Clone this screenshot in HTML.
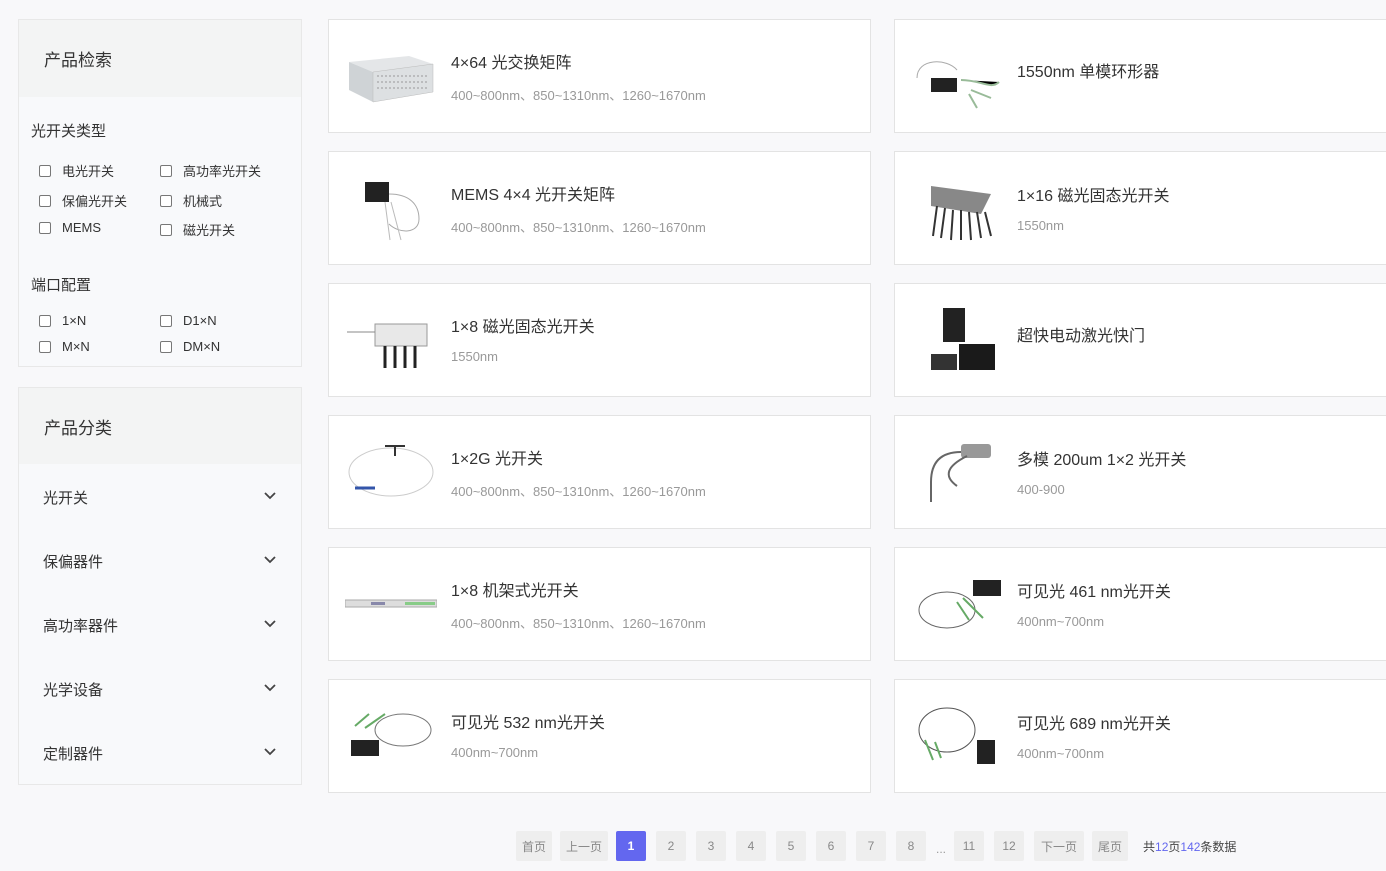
<!DOCTYPE html>
<html><head><meta charset="utf-8"><style>
*{margin:0;padding:0;box-sizing:border-box}
body{width:1386px;height:871px;background:#f8f8fa;font-family:"Liberation Sans","Noto Sans CJK SC",sans-serif;color:#333;position:relative;overflow:hidden}
.box{position:absolute;left:18px;width:284px;background:#f8f9fb;border:1px solid #e8e8e8}
.hd{height:77px;background:#f3f4f4;font-size:17px;padding:26px 0 0 25px;color:#333}
.sec{font-size:15px;position:absolute;left:12px}
.cb{position:absolute;font-size:13px;color:#333;display:flex;align-items:center}
.cb i{display:inline-block;width:12px;height:12px;border:1px solid #777;border-radius:2px;margin-right:11px;background:#fff}
.cat{position:absolute;left:24px;font-size:15px;width:234px}
.cat svg{position:absolute;right:0;top:4px}
.card{position:absolute;width:543px;height:114px;background:#fff;border:1px solid #e3e3e3}
.card .im{position:absolute;left:16px;top:20px;width:92px;height:72px}
.card .t{position:absolute;left:122px;top:29px;font-size:16px;color:#333}
.card .s{position:absolute;left:122px;top:65px;font-size:13px;color:#999}
.pg{position:absolute;top:831px;height:30px;background:#eee;color:#888;font-size:12px;display:flex;align-items:center;justify-content:center;border-radius:2px}
</style></head><body>
<div class="box" style="top:19px;height:348px">
<div class="hd">产品检索</div>
<div class="sec" style="top:100px">光开关类型</div>
<div class="cb" style="left:20px;top:141px"><i></i>电光开关</div>
<div class="cb" style="left:141px;top:141px"><i></i>高功率光开关</div>
<div class="cb" style="left:20px;top:171px"><i></i>保偏光开关</div>
<div class="cb" style="left:141px;top:171px"><i></i>机械式</div>
<div class="cb" style="left:20px;top:200px"><i></i>MEMS</div>
<div class="cb" style="left:141px;top:200px"><i></i>磁光开关</div>
<div class="sec" style="top:254px">端口配置</div>
<div class="cb" style="left:20px;top:293px"><i></i>1×N</div>
<div class="cb" style="left:141px;top:293px"><i></i>D1×N</div>
<div class="cb" style="left:20px;top:319px"><i></i>M×N</div>
<div class="cb" style="left:141px;top:319px"><i></i>DM×N</div>
</div>
<div class="box" style="top:387px;height:398px">
<div class="hd" style="height:76px">产品分类</div>
<div class="cat" style="top:99px">光开关<svg width="14" height="9" viewBox="0 0 14 9"><path d="M2 2l5 5 5-5" stroke="#444" stroke-width="1.8" fill="none"/></svg></div>
<div class="cat" style="top:163px">保偏器件<svg width="14" height="9" viewBox="0 0 14 9"><path d="M2 2l5 5 5-5" stroke="#444" stroke-width="1.8" fill="none"/></svg></div>
<div class="cat" style="top:227px">高功率器件<svg width="14" height="9" viewBox="0 0 14 9"><path d="M2 2l5 5 5-5" stroke="#444" stroke-width="1.8" fill="none"/></svg></div>
<div class="cat" style="top:291px">光学设备<svg width="14" height="9" viewBox="0 0 14 9"><path d="M2 2l5 5 5-5" stroke="#444" stroke-width="1.8" fill="none"/></svg></div>
<div class="cat" style="top:355px">定制器件<svg width="14" height="9" viewBox="0 0 14 9"><path d="M2 2l5 5 5-5" stroke="#444" stroke-width="1.8" fill="none"/></svg></div>
</div>

<div class="card" style="left:328px;top:19px"><svg class="im" viewBox="0 0 92 72"><path d="M4 22l60-6 24 8-60 8z" fill="#e4e6e8"/><path d="M4 22l24 10v30L4 50z" fill="#cfd3d6"/><path d="M28 32l60-8v28l-60 10z" fill="#dde0e2" stroke="#bbb" stroke-width=".5"/><path d="M32 36h52M32 42h52M32 48h52" stroke="#999" stroke-dasharray="2 2"/></svg><div class="t">4×64 光交换矩阵</div><div class="s">400~800nm、850~1310nm、1260~1670nm</div></div>
<div class="card" style="left:328px;top:151px"><svg class="im" viewBox="0 0 92 72"><rect x="20" y="10" width="24" height="20" fill="#222"/><path d="M44 22c20 0 30 10 30 25s-20 15-30 5" stroke="#aaa" fill="none"/><path d="M40 30l5 38M46 30l10 38" stroke="#bbb"/></svg><div class="t">MEMS 4×4 光开关矩阵</div><div class="s">400~800nm、850~1310nm、1260~1670nm</div></div>
<div class="card" style="left:328px;top:283px"><svg class="im" viewBox="0 0 92 72"><path d="M30 20h52v22H30z" fill="#e8e8e8" stroke="#999"/><path d="M2 28h28" stroke="#888"/><path d="M40 42v22M50 42v22M60 42v22M70 42v22" stroke="#222" stroke-width="3"/></svg><div class="t">1×8 磁光固态光开关</div><div class="s">1550nm</div></div>
<div class="card" style="left:328px;top:415px"><svg class="im" viewBox="0 0 92 72"><ellipse cx="46" cy="36" rx="42" ry="24" stroke="#ccc" fill="none"/><path d="M40 10h20M50 10v10" stroke="#333" stroke-width="2"/><path d="M10 52h20" stroke="#3355aa" stroke-width="3"/></svg><div class="t">1×2G 光开关</div><div class="s">400~800nm、850~1310nm、1260~1670nm</div></div>
<div class="card" style="left:328px;top:547px"><svg class="im" viewBox="0 0 92 72"><rect x="0" y="32" width="92" height="7" fill="#ddd" stroke="#aaa"/><rect x="26" y="34" width="14" height="3" fill="#88a"/><rect x="60" y="34" width="30" height="3" fill="#8c8"/></svg><div class="t">1×8 机架式光开关</div><div class="s">400~800nm、850~1310nm、1260~1670nm</div></div>
<div class="card" style="left:328px;top:679px"><svg class="im" viewBox="0 0 92 72"><ellipse cx="58" cy="30" rx="28" ry="16" stroke="#777" fill="none"/><rect x="6" y="40" width="28" height="16" fill="#222"/><path d="M10 26l14-12M20 28l20-14" stroke="#6a6" stroke-width="2"/></svg><div class="t">可见光 532 nm光开关</div><div class="s">400nm~700nm</div></div>

<div class="card" style="left:894px;top:19px"><svg class="im" viewBox="0 0 92 72"><path d="M6 38c0-20 30-20 40-8" stroke="#aaa" fill="none"/><rect x="20" y="38" width="26" height="14" fill="#222"/><path d="M50 40c20 0 30 10 38 2M60 50l20 8M58 54l8 14" stroke="#9b9" stroke-width="2"/></svg><div class="t" style="top:38px">1550nm 单模环形器</div></div>
<div class="card" style="left:894px;top:151px"><svg class="im" viewBox="0 0 92 72"><path d="M20 14l60 8-10 20-50-8z" fill="#888"/><path d="M26 34l-4 30M34 36l-4 30M42 38l-2 30M50 38l0 30M58 40l2 28M66 40l4 26M74 40l6 24" stroke="#333" stroke-width="2"/></svg><div class="t" style="top:30px">1×16 磁光固态光开关</div><div class="s" style="top:66px">1550nm</div></div>
<div class="card" style="left:894px;top:283px"><svg class="im" viewBox="0 0 92 72"><rect x="32" y="4" width="22" height="34" fill="#222"/><rect x="48" y="40" width="36" height="26" fill="#1a1a1a"/><path d="M20 50h26v16H20z" fill="#333"/></svg><div class="t" style="top:38px">超快电动激光快门</div></div>
<div class="card" style="left:894px;top:415px"><svg class="im" viewBox="0 0 92 72"><rect x="50" y="8" width="30" height="14" rx="3" fill="#999"/><path d="M50 16c-20 0-30 10-30 30v20M56 20c-20 10-24 20-10 30" stroke="#666" fill="none" stroke-width="2"/></svg><div class="t" style="top:30px">多模 200um 1×2 光开关</div><div class="s" style="top:66px">400-900</div></div>
<div class="card" style="left:894px;top:547px"><svg class="im" viewBox="0 0 92 72"><ellipse cx="36" cy="42" rx="28" ry="18" stroke="#666" fill="none"/><rect x="62" y="12" width="28" height="16" fill="#222"/><path d="M46 34l12 18M52 30l20 20" stroke="#6a6" stroke-width="2"/></svg><div class="t" style="top:30px">可见光 461 nm光开关</div><div class="s" style="top:66px">400nm~700nm</div></div>
<div class="card" style="left:894px;top:679px"><svg class="im" viewBox="0 0 92 72"><ellipse cx="36" cy="30" rx="28" ry="22" stroke="#555" fill="none"/><rect x="66" y="40" width="18" height="24" fill="#222"/><path d="M14 40l8 20M24 42l6 16" stroke="#6a6" stroke-width="2"/></svg><div class="t" style="top:30px">可见光 689 nm光开关</div><div class="s" style="top:66px">400nm~700nm</div></div>

<div class="pg" style="left:516px;width:36px">首页</div>
<div class="pg" style="left:560px;width:48px">上一页</div>
<div class="pg" style="left:616px;width:30px;background:#6367ef;color:#fff;font-weight:bold">1</div>
<div class="pg" style="left:656px;width:30px">2</div>
<div class="pg" style="left:696px;width:30px">3</div>
<div class="pg" style="left:736px;width:30px">4</div>
<div class="pg" style="left:776px;width:30px">5</div>
<div class="pg" style="left:816px;width:30px">6</div>
<div class="pg" style="left:856px;width:30px">7</div>
<div class="pg" style="left:896px;width:30px">8</div>
<div style="position:absolute;left:936px;top:842px;font-size:12px;color:#999">...</div>
<div class="pg" style="left:954px;width:30px">11</div>
<div class="pg" style="left:994px;width:30px">12</div>
<div class="pg" style="left:1034px;width:50px">下一页</div>
<div class="pg" style="left:1092px;width:36px">尾页</div>
<div style="position:absolute;left:1143px;top:838px;font-size:12px;color:#444">共<span style="color:#6367ef">12</span>页<span style="color:#6367ef">142</span>条数据</div>
</body></html>
